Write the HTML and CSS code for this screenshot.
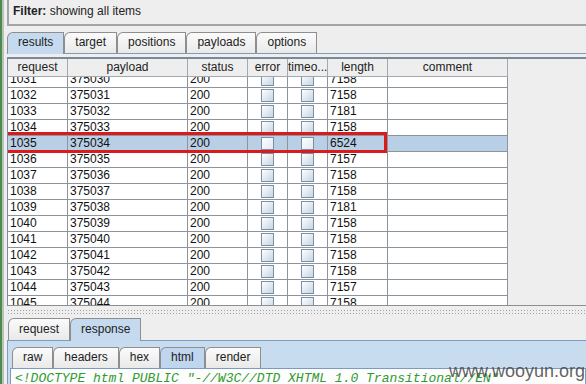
FILE: index.html
```html
<!DOCTYPE html>
<html lang="en">
<head>
    <meta charset="UTF-8">
    <title>Intruder attack results</title>
    <link rel="stylesheet" href="styles.css">
</head>
<body>
<div class="window">

    <div class="filter"><b>Filter:</b> showing all items</div>

    <div class="tabs main">
        <div class="tab active">results</div>
        <div class="tab">target</div>
        <div class="tab">positions</div>
        <div class="tab">payloads</div>
        <div class="tab">options</div>
    </div>

    <div class="results">
        <div class="thead">
            <div class="th">request</div>
            <div class="th">payload</div>
            <div class="th">status</div>
            <div class="th">error</div>
            <div class="th">timeo...</div>
            <div class="th">length</div>
            <div class="th">comment</div>
        </div>
        <div class="tbody">
            <div class="rows">
                <div class="row"><div class="td">1031</div><div class="td">375030</div><div class="td">200</div><div class="td cb"><span class="check"></span></div><div class="td cb"><span class="check"></span></div><div class="td">7158</div><div class="td"></div></div>
                <div class="row"><div class="td">1032</div><div class="td">375031</div><div class="td">200</div><div class="td cb"><span class="check"></span></div><div class="td cb"><span class="check"></span></div><div class="td">7158</div><div class="td"></div></div>
                <div class="row"><div class="td">1033</div><div class="td">375032</div><div class="td">200</div><div class="td cb"><span class="check"></span></div><div class="td cb"><span class="check"></span></div><div class="td">7181</div><div class="td"></div></div>
                <div class="row"><div class="td">1034</div><div class="td">375033</div><div class="td">200</div><div class="td cb"><span class="check"></span></div><div class="td cb"><span class="check"></span></div><div class="td">7158</div><div class="td"></div></div>
                <div class="row selected"><div class="td">1035</div><div class="td">375034</div><div class="td">200</div><div class="td cb"><span class="check"></span></div><div class="td cb"><span class="check"></span></div><div class="td">6524</div><div class="td"></div><span class="mark"></span></div>
                <div class="row"><div class="td">1036</div><div class="td">375035</div><div class="td">200</div><div class="td cb"><span class="check"></span></div><div class="td cb"><span class="check"></span></div><div class="td">7157</div><div class="td"></div></div>
                <div class="row"><div class="td">1037</div><div class="td">375036</div><div class="td">200</div><div class="td cb"><span class="check"></span></div><div class="td cb"><span class="check"></span></div><div class="td">7158</div><div class="td"></div></div>
                <div class="row"><div class="td">1038</div><div class="td">375037</div><div class="td">200</div><div class="td cb"><span class="check"></span></div><div class="td cb"><span class="check"></span></div><div class="td">7158</div><div class="td"></div></div>
                <div class="row"><div class="td">1039</div><div class="td">375038</div><div class="td">200</div><div class="td cb"><span class="check"></span></div><div class="td cb"><span class="check"></span></div><div class="td">7181</div><div class="td"></div></div>
                <div class="row"><div class="td">1040</div><div class="td">375039</div><div class="td">200</div><div class="td cb"><span class="check"></span></div><div class="td cb"><span class="check"></span></div><div class="td">7158</div><div class="td"></div></div>
                <div class="row"><div class="td">1041</div><div class="td">375040</div><div class="td">200</div><div class="td cb"><span class="check"></span></div><div class="td cb"><span class="check"></span></div><div class="td">7158</div><div class="td"></div></div>
                <div class="row"><div class="td">1042</div><div class="td">375041</div><div class="td">200</div><div class="td cb"><span class="check"></span></div><div class="td cb"><span class="check"></span></div><div class="td">7158</div><div class="td"></div></div>
                <div class="row"><div class="td">1043</div><div class="td">375042</div><div class="td">200</div><div class="td cb"><span class="check"></span></div><div class="td cb"><span class="check"></span></div><div class="td">7158</div><div class="td"></div></div>
                <div class="row"><div class="td">1044</div><div class="td">375043</div><div class="td">200</div><div class="td cb"><span class="check"></span></div><div class="td cb"><span class="check"></span></div><div class="td">7157</div><div class="td"></div></div>
                <div class="row"><div class="td">1045</div><div class="td">375044</div><div class="td">200</div><div class="td cb"><span class="check"></span></div><div class="td cb"><span class="check"></span></div><div class="td">7158</div><div class="td"></div></div>
            </div>
        </div>
    </div>

    <div class="split"></div>

    <div class="tabs sub">
        <div class="tab">request</div>
        <div class="tab active">response</div>
    </div>

    <div class="pane">
        <div class="tabs inner">
            <div class="tab">raw</div>
            <div class="tab">headers</div>
            <div class="tab">hex</div>
            <div class="tab active">html</div>
            <div class="tab">render</div>
        </div>
        <div class="code">&lt;!DOCTYPE html PUBLIC "-//W3C//DTD XHTML 1.0 Transitional//EN"</div>
    </div>

    <div class="watermark">www.wooyun.org</div>
</div>
</body>
</html>
```

FILE: styles.css
```css
* {
    box-sizing: border-box;
}

body {
    margin: 0;
    background-color: #eeeeee;
    font-family: "Liberation Sans", Arial, sans-serif;
    font-size: 12px;
    color: #111;
    overflow: hidden;
}

.window {
    position: relative;
    width: 586px;
    height: 384px;
    border-left: 2px solid #4b8b4b;
    box-shadow: inset 2px 0 #b9c2b9;
    padding-left: 5px;
    overflow: hidden;
}

/* filter bar */
.filter {
    height: 26px;
    border-left: 2px solid #a4a4a4;
    border-bottom: 2px solid #a4a4a4;
    padding-left: 4px;
    line-height: 23px;
    color: #222;
}

/* tabs */
.tabs {
    display: flex;
    align-items: flex-end;
    border-bottom: 1px solid #7d9bc0;
}

.tabs.main {
    margin-top: 6px;
    height: 22px;
}

.tab {
    height: 21px;
    padding: 0 10px;
    border: 1px solid #8e8e8e;
    border-bottom: none;
    border-top-left-radius: 6px;
    line-height: 19px;
    background: linear-gradient(#fbfbfb, #e9e9e9);
    color: #222;
    white-space: nowrap;
}

.tab.active {
    background: #c6daef;
    height: 22px;
    margin-bottom: -1px;
}

.tabs.sub {
    height: 23px;
    padding-left: 1px;
}

.tabs.sub .tab {
    height: 22px;
    line-height: 20px;
}

.tabs.sub .tab.active {
    height: 23px;
}

.tabs.inner {
    height: 21px;
    border-bottom: none;
}

.tabs.inner .tab.active {
    height: 21px;
    margin-bottom: 0;
    background: #c0d5ee;
}

/* results table */
.results {
    margin-top: 3px;
    border-top: 2px solid #7b8a9a;
    border-left: 1px solid #7b8a9a;
    border-bottom: 1px solid #8a8f96;
}

.thead,
.row {
    display: grid;
    grid-template-columns: 60px 120px 60px 40px 40px 60px 120px;
}

.th {
    height: 18px;
    line-height: 17px;
    text-align: center;
    background-color: #eeeeee;
    border-right: 1px solid #a3a9b0;
    border-bottom: 1px solid #a3a9b0;
    color: #222;
    white-space: nowrap;
    overflow: hidden;
}

.tbody {
    height: 228px;
    overflow: hidden;
}

.rows {
    margin-top: -5px;
}

.row {
    height: 16px;
}

.row.selected {
    position: relative;
}

.td {
    background-color: #fff;
    border-right: 1px solid #8e949b;
    border-bottom: 1px solid #8e949b;
    padding-left: 2px;
    line-height: 15px;
    white-space: nowrap;
}

.selected .td {
    background-color: #b8cfe6;
}

.cb {
    display: flex;
    justify-content: center;
    align-items: center;
    padding-left: 0;
}

.check {
    width: 13px;
    height: 13px;
    border: 1px solid #7c8ea4;
    background: linear-gradient(135deg, #ffffff, #c6d4e2);
}

.selected .check {
    background: linear-gradient(135deg, #ffffff, #e2e9f1);
}

.mark {
    position: absolute;
    left: -3px;
    top: -4px;
    width: 382px;
    height: 21px;
    border: 3px solid #d91b1b;
}

/* split divider */
.split {
    height: 12px;
    padding: 3px 0 4px;
    background-image: radial-gradient(circle, #a0a0a0 0.8px, transparent 1px);
    background-size: 3px 3px;
    background-clip: content-box;
    background-origin: content-box;
}

/* response pane */
.pane {
    background-color: #c8dcf0;
    border-left: 1px solid #7d9bc0;
    padding: 6px 0 0 4px;
    height: 60px;
}

.code {
    margin-left: -2px;
    border: 1px solid #7d9bc0;
    background-color: #fdfdfd;
    padding: 2px 4px;
    height: 40px;
    font-family: "Liberation Mono", "Courier New", monospace;
    font-style: italic;
    font-size: 13px;
    line-height: 16px;
    color: #2f9a2f;
    white-space: nowrap;
}

.watermark {
    position: absolute;
    left: 447px;
    top: 361px;
    font-size: 18px;
    color: rgba(70, 70, 70, 0.85);
    white-space: nowrap;
}
```
